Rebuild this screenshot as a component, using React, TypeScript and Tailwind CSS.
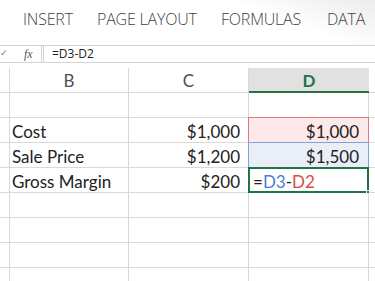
import React from "react";

const cellFont = { fontFamily: "Lato, 'Open Sans', sans-serif" };

function Row({
  b,
  c,
  d,
  dClass = "",
  bottomClass = "border-b border-[#d9d9d9]",
}: {
  b?: React.ReactNode;
  c?: React.ReactNode;
  d?: React.ReactNode;
  dClass?: string;
  bottomClass?: string;
}) {
  return (
    <div className="flex h-[25px] shrink-0">
      <div className="w-[10px] shrink-0 border-r border-b border-[#d9d9d9]" />
      <div className={`w-[119px] shrink-0 border-r border-[#d9d9d9] ${bottomClass} flex items-center pl-[2px] pt-[2px]`}>
        {b}
      </div>
      <div className={`w-[120px] shrink-0 border-r border-[#d9d9d9] ${bottomClass} flex items-center justify-end pr-[8px] pt-[2px]`}>
        {c}
      </div>
      <div className={`w-[120px] shrink-0 border-r border-b border-[#d9d9d9] relative flex items-center ${dClass}`}>{d}</div>
      <div className="flex-1 border-b border-[#d9d9d9]" />
    </div>
  );
}

export default function App() {
  return (
    <div className="w-[375px] h-[281px] overflow-hidden bg-white text-[#222]">
      {/* Ribbon */}
      <div
        className="h-[45px] flex items-start pt-[7px] text-[16px] font-light tracking-[-0.2px] text-[#3f3f3f] bg-[linear-gradient(200deg,#ececec_0%,#ffffff_30%)]"
        style={{ fontFamily: "'Open Sans', sans-serif" }}
      >
        <span className="ml-[23px] w-[74px] shrink-0">INSERT</span>
        <span className="w-[124px] shrink-0">PAGE LAYOUT</span>
        <span className="w-[106px] shrink-0">FORMULAS</span>
        <span className="shrink-0">DATA</span>
      </div>
      {/* Formula bar */}
      <div className="h-[18px] flex border-y border-[#d4d4d4] bg-white">
        <div className="w-[42px] shrink-0 flex items-center relative border-r border-[#d4d4d4]">
          <span className="text-[9px] text-[#777] ml-[0px]" style={{ fontFamily: "'DejaVu Sans', sans-serif" }}>✓</span>
          <span
            className="absolute left-[24px] top-[-1px] text-[12px] italic text-[#555]"
            style={{ fontFamily: "'Liberation Serif', serif" }}
          >
            fx
          </span>
        </div>
        <div className="flex-1 ml-[1px] border-l border-[#d4d4d4] flex items-center pl-[8px] text-[12px] text-[#222]" style={{ fontFamily: "'Open Sans', sans-serif" }}>
          =D3-D2
        </div>
      </div>
      <div className="h-[5px]" />
      {/* Grid */}
      <div style={cellFont} className="text-[17px] leading-none">
        {/* header row */}
        <div className="flex h-[25px]">
          <div className="w-[10px] shrink-0 border-r border-b border-[#d9d9d9]" />
          <div className="w-[119px] shrink-0 border-r border-b border-[#d9d9d9] flex items-center justify-center text-[#505050] pt-[1px]">B</div>
          <div className="w-[120px] shrink-0 border-r border-b border-[#d9d9d9] flex items-center justify-center text-[#505050] pt-[1px]">C</div>
          <div className="w-[120px] shrink-0 bg-[#e1e1e1] border-b-2 border-[#217346] flex items-center justify-center font-bold text-[#217346] pt-[2px]">D</div>
          <div className="flex-1 border-b border-[#d9d9d9]" />
        </div>
        <Row />
        <Row
          b="Cost"
          c="$1,000"
          d={<div className="absolute inset-[-1px] bg-[#fde9e9] border border-[#e07a7a] flex items-center justify-end pr-[9px] pt-[2px]">$1,000</div>}
        />
        <Row
          b="Sale Price"
          c="$1,200"
          bottomClass="border-b border-[#9a9a9a]"
          d={<div className="absolute inset-[-1px] bg-[#e9eef8] border border-[#7fa3dc] flex items-center justify-end pr-[9px] pt-[2px]">$1,500</div>}
        />
        <Row
          b="Gross Margin"
          c="$200"
          d={
            <div className="absolute inset-[-1px] bg-white border-2 border-[#217346] flex items-center pl-[3px] pt-[2px]">
              <span>=</span>
              <span className="text-[#4a7fd6]">D3</span>
              <span>-</span>
              <span className="text-[#e04848]">D2</span>
              <div className="absolute right-[-3px] bottom-[-3px] w-[4px] h-[4px] bg-[#217346] border border-white" />
            </div>
          }
        />
        <Row />
        <Row />
        <Row />
        <Row />
      </div>
    </div>
  );
}
